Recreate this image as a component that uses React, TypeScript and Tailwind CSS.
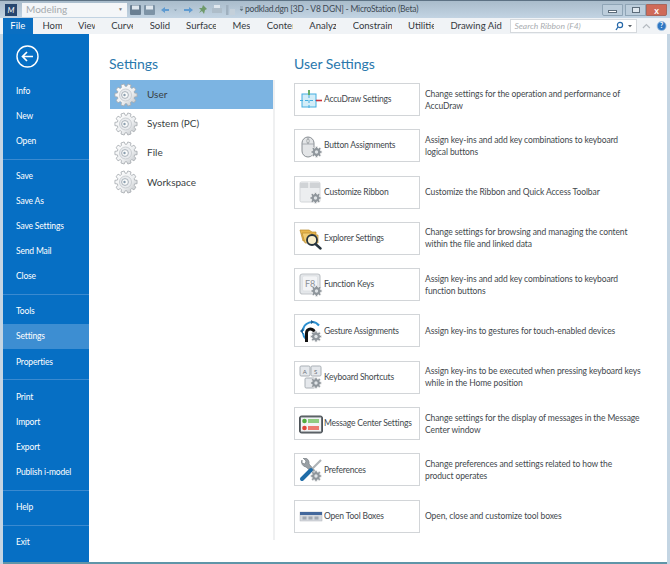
import type { ReactNode } from "react";

const font = { fontFamily: 'Lato, "Open Sans", "Liberation Sans", sans-serif' };

// little cog polygon, used all over the settings icons
function gearPoints(cx: number, cy: number, outer: number, inner: number, teeth: number) {
  const pts: string[] = [];
  for (let i = 0; i < teeth; i++) {
    const step = (Math.PI * 2) / teeth;
    const a = i * step;
    [[-0.3, outer], [0.3, outer]].forEach(([d, r]) => {
      pts.push(`${(cx + Math.cos(a + d * step * 0.8) * r).toFixed(2)},${(cy + Math.sin(a + d * step * 0.8) * r).toFixed(2)}`);
    });
    pts.push(`${(cx + Math.cos(a + step * 0.35) * inner).toFixed(2)},${(cy + Math.sin(a + step * 0.35) * inner).toFixed(2)}`);
    pts.push(`${(cx + Math.cos(a + step * 0.65) * inner).toFixed(2)},${(cy + Math.sin(a + step * 0.65) * inner).toFixed(2)}`);
  }
  return pts.join(" ");
}

const SmallGear = ({ cx = 19, cy = 19 }: { cx?: number; cy?: number }) => (
  <g>
    <polygon points={gearPoints(cx, cy, 5.6, 4.2, 8)} fill="#8f969c" stroke="#f4f4f4" strokeWidth="0.7" />
    <circle cx={cx} cy={cy} r="1.7" fill="#dfe3e6" />
  </g>
);

const BigGear = () => (
  <svg width="24" height="24" viewBox="0 0 24 24" className="shrink-0">
    <defs>
      <linearGradient id="gearFill" x1="0" y1="0" x2="1" y2="1">
        <stop offset="0" stopColor="#ffffff" />
        <stop offset="0.6" stopColor="#eceef0" />
        <stop offset="1" stopColor="#b9bdc1" />
      </linearGradient>
    </defs>
    <polygon points={gearPoints(12, 12, 11.2, 8.8, 10)} fill="url(#gearFill)" stroke="#a4a9ae" strokeWidth="0.8" />
    <circle cx="11.5" cy="12" r="6" fill="#e9ebee" stroke="#c2c6ca" strokeWidth="0.8" />
    <circle cx="11" cy="12" r="3.4" fill="#f9fafa" stroke="#a9b2ba" strokeWidth="1" />
    <circle cx="10.5" cy="12" r="1.2" fill="#8b9eae" />
  </svg>
);

const Icon = ({ children }: { children: ReactNode }) => (
  <svg width="24" height="24" viewBox="0 0 24 24" className="shrink-0">
    {children}
  </svg>
);

const icons: Record<string, ReactNode> = {
  accu: (
    <Icon>
      <rect x="3" y="6" width="14" height="13" fill="#d3edf8" stroke="#45aee0" strokeWidth="1" />
      <path d="M10 2v20M1 12.5h18" stroke="#45aee0" strokeWidth="1" strokeDasharray="3 2" fill="none" />
      <path d="M10 2v5" stroke="#59a648" strokeWidth="1.6" />
      <path d="M17 12.5h6" stroke="#c8323c" strokeWidth="1.6" />
    </Icon>
  ),
  mouse: (
    <Icon>
      <path d="M3 9a6 6 0 0 1 12 0v8a6 6 0 0 1-12 0z" fill="#e3e5e7" stroke="#8a8f94" strokeWidth="1" />
      <path d="M3 10h12M9 3v7" stroke="#9a9fa4" strokeWidth="0.8" />
      <rect x="8" y="5" width="2" height="4" rx="1" fill="#fff" stroke="#6d7276" strokeWidth="0.6" />
      <SmallGear cx={17.5} cy={18} />
    </Icon>
  ),
  ribbon: (
    <Icon>
      <rect x="1" y="2" width="20" height="20" rx="1.5" fill="#eceef0" stroke="#d3d6d9" strokeWidth="1" />
      <path d="M1 5.5h20" stroke="#d0d3d6" strokeWidth="5" />
      <path d="M10 2v6" stroke="#fff" strokeWidth="1" />
      <SmallGear cx={16.5} cy={18} />
    </Icon>
  ),
  explorer: (
    <Icon>
      <path d="M1 4h9l3 2h4v9H4z" fill="#e8b64c" stroke="#b98a2c" strokeWidth="0.7" />
      <path d="M3 7h9l3 2h4v8H6z" fill="#f2cd73" stroke="#b98a2c" strokeWidth="0.7" />
      <circle cx="13" cy="14" r="5" fill="#f8edc9" stroke="#26343e" strokeWidth="1.8" />
      <path d="M16.5 18l5 4.5" stroke="#26343e" strokeWidth="2.4" strokeLinecap="round" />
    </Icon>
  ),
  fkeys: (
    <Icon>
      <rect x="1" y="1" width="20" height="20" rx="2.5" fill="#e4e7ea" stroke="#c2c6ca" strokeWidth="1.2" />
      <rect x="3.5" y="3" width="15" height="15" rx="1.5" fill="#f3f4f6" stroke="#d9dcdf" strokeWidth="0.6" />
      <text x="6" y="14" fontSize="9" fill="#8b9196" style={font}>F8</text>
      <SmallGear cx={17.5} cy={18} />
    </Icon>
  ),
  gesture: (
    <Icon>
      <path d="M4 12a9 9 0 0 1 16-5.5" fill="none" stroke="#2b8fd0" strokeWidth="2" />
      <path d="M4 14a9 9 0 0 0 3 6" fill="none" stroke="#2b8fd0" strokeWidth="2" />
      <path d="M1 12l3-3v6zM12 1l3 2-3 2z" fill="#1d5f92" />
      <path d="M6 23v-9a5.5 5.5 0 0 1 11 0v3h-3v-3a2.5 2.5 0 0 0-5 0v9z" fill="#111" />
      <SmallGear cx={17} cy={17.5} />
    </Icon>
  ),
  keyboard: (
    <Icon>
      <rect x="1" y="1" width="10" height="10" rx="1.2" fill="#e5e8ec" stroke="#aab0b6" strokeWidth="1" />
      <rect x="12" y="1" width="10" height="10" rx="1.2" fill="#e5e8ec" stroke="#aab0b6" strokeWidth="1" />
      <rect x="6" y="13" width="10" height="10" rx="1.2" fill="#e5e8ec" stroke="#aab0b6" strokeWidth="1" />
      <text x="3.8" y="8.5" fontSize="6" fill="#6c7278" style={font}>A</text>
      <text x="15" y="8.5" fontSize="6" fill="#6c7278" style={font}>S</text>
      <SmallGear cx={17} cy={18} />
    </Icon>
  ),
  message: (
    <Icon>
      <rect x="0.5" y="4" width="23" height="17" rx="2" fill="#6a7176" stroke="#4c5257" strokeWidth="1" />
      <rect x="2" y="5.5" width="20" height="14" fill="#f1f3f4" />
      <circle cx="5.5" cy="9" r="2.3" fill="#50ad3e" />
      <rect x="9" y="7" width="11" height="4" fill="#8fcb80" />
      <circle cx="5.5" cy="16" r="2.3" fill="#e0453a" />
      <rect x="9" y="14" width="11" height="4" fill="#ec7a70" />
    </Icon>
  ),
  prefs: (
    <Icon>
      <path d="M3 2a5 5 0 0 0 4 7l10 9 2-2-9-10a5 5 0 0 0-6-6l3 3-1 3-3-1z" fill="#9aa0a5" stroke="#71777c" strokeWidth="0.6" />
      <path d="M22 2l-9 9" stroke="#aeb3b7" strokeWidth="2.2" />
      <path d="M12 12l-9 9" stroke="#1f6ca8" strokeWidth="4" strokeLinecap="round" />
      <SmallGear cx={17} cy={18} />
    </Icon>
  ),
  toolbox: (
    <Icon>
      <rect x="1" y="8" width="22" height="9" fill="#d5d8dd" stroke="#b0b5bc" strokeWidth="0.5" />
      <rect x="1" y="8" width="22" height="3" fill="#44689c" />
      <path d="M3.5 14h4M9.5 14h4M15.5 14h4" stroke="#a1a8b2" strokeWidth="3" />
    </Icon>
  ),
};

const settingsButtons = [
  { icon: "accu", label: "AccuDraw Settings", text: "Change settings for the operation and performance of AccuDraw" },
  { icon: "mouse", label: "Button Assignments", text: "Assign key-ins and add key combinations to keyboard logical buttons" },
  { icon: "ribbon", label: "Customize Ribbon", text: "Customize the Ribbon and Quick Access Toolbar" },
  { icon: "explorer", label: "Explorer Settings", text: "Change settings for browsing and managing the content within the file and linked data" },
  { icon: "fkeys", label: "Function Keys", text: "Assign key-ins and add key combinations to keyboard function buttons" },
  { icon: "gesture", label: "Gesture Assignments", text: "Assign key-ins to gestures for touch-enabled devices" },
  { icon: "keyboard", label: "Keyboard Shortcuts", text: "Assign key-ins to be executed when pressing keyboard keys while in the Home position" },
  { icon: "message", label: "Message Center Settings", text: "Change settings for the display of messages in the Message Center window" },
  { icon: "prefs", label: "Preferences", text: "Change preferences and settings related to how the product operates" },
  { icon: "toolbox", label: "Open Tool Boxes", text: "Open, close and customize tool boxes" },
];

const tabs = [
  { name: "Home", w: "w-[19px]" },
  { name: "View", w: "w-[17px]" },
  { name: "Curve", w: "w-[22px]" },
  { name: "Solids", w: "w-[20px]" },
  { name: "Surfaces", w: "w-[30px]" },
  { name: "Mesh", w: "w-[18px]" },
  { name: "Content", w: "w-[26px]" },
  { name: "Analyze", w: "w-[27px]" },
  { name: "Constraint", w: "w-[39px]" },
  { name: "Utilities", w: "w-[26px]" },
  { name: "Drawing Aid", w: "w-[54px]" },
];

const menuGroups = [
  ["Info", "New", "Open"],
  ["Save", "Save As", "Save Settings", "Send Mail", "Close"],
  ["Tools", "Settings", "Properties"],
  ["Print", "Import", "Export", "Publish i-model"],
  ["Help"],
  ["Exit"],
];

const TitleBar = () => (
  <div className="flex h-[18px] shrink-0 items-center border-t border-[#5d7284] bg-gradient-to-b from-[#a9bccb] to-[#c3d4e3] pl-[5px]">
    <div className="flex h-[12px] w-[12px] items-center justify-center bg-[#27476f] text-[8px] italic leading-none text-white">M</div>
    <div className="ml-[5px] flex h-[14px] w-[105px] items-center justify-between bg-[#f4f6f8] px-[4px] text-[10px] text-[#a5a9ad]">
      <span>Modeling</span>
      <span className="text-[5px] text-[#777]">▼</span>
    </div>
    <svg width="116" height="14" viewBox="0 0 116 14" className="ml-[2px] shrink-0">
      <rect x="1" y="2" width="11" height="10" rx="1" fill="#6a7f92" />
      <rect x="3" y="2.5" width="7" height="4" fill="#dfe7ee" />
      <rect x="15" y="2" width="11" height="10" rx="1" fill="#7d93a6" />
      <rect x="17" y="2.5" width="7" height="4" fill="#dfe7ee" />
      <path d="M32 7l4-3v2h4v2h-4v2z" fill="#5f9bd1" />
      <path d="M45 6.5h3l-1.5 1.5z" fill="#7f95a8" />
      <path d="M64 7l-4-3v2h-5v2h5v2z" fill="#5f9bd1" />
      <path d="M74 2l4 4-2 1-1 4-2-3-3 2 2-3-2-2 3 0z" fill="#6f9a6a" />
      <rect x="83" y="5" width="10" height="5" fill="#aebdc9" />
      <rect x="85" y="2" width="6" height="3" fill="#dfe7ee" />
      <rect x="97" y="2" width="2.5" height="10" fill="#9fb0bf" />
      <rect x="101" y="6" width="5" height="6" fill="#c4d0da" />
      <path d="M111 6h3l-1.5 2zM111 4h3" stroke="#60717f" strokeWidth="0.5" fill="#60717f" />
    </svg>
    <span className="whitespace-nowrap text-[8.5px] tracking-[-0.2px] text-[#3e4a55]">podklad.dgn [3D - V8 DGN] - MicroStation (Beta)</span>
    <div className="ml-auto mr-[3px] mt-[1px] flex h-[12px] items-stretch">
      <div className="flex w-[21px] items-center justify-center rounded-bl-[2px] border border-[#8fa5b6] bg-[#bccddb]">
        <div className="mt-[3px] h-[3px] w-[9px] border border-[#5c6c7a] bg-white" />
      </div>
      <div className="ml-[2px] flex w-[21px] items-center justify-center border border-[#8fa5b6] bg-[#bccddb]">
        <div className="h-[6px] w-[8px] border border-[#5c6c7a] bg-[#dfe7ee]" />
      </div>
      <div className="flex w-[21px] items-center justify-center rounded-br-[2px] border border-[#a8675c] bg-[#cf6a58] text-[9px] font-bold leading-none text-white">x</div>
    </div>
  </div>
);

const RibbonTabs = () => (
  <div className="flex h-[16px] shrink-0 items-center bg-[#f0f3f6] pl-[3px] text-[9.5px] text-[#33383d]">
    <div className="flex h-[16px] w-[30px] items-center justify-center bg-[#0a6fc2] text-white">File</div>
    <div className="ml-[10px] flex gap-[16.4px]">
      {tabs.map((t) => (
        <span key={t.name} className={`${t.w} overflow-hidden whitespace-nowrap`}>{t.name}</span>
      ))}
    </div>
    <div className="ml-[6px] flex h-[14px] w-[128px] items-center justify-between border border-[#d5d9dd] bg-white pl-[3px] pr-[3px]">
      <span className="text-[8.5px] italic text-[#a9adb1]">Search Ribbon (F4)</span>
      <svg width="18" height="10" viewBox="0 0 18 10">
        <circle cx="5" cy="4" r="2.6" fill="none" stroke="#2467a8" strokeWidth="1.2" />
        <path d="M3 6l-2 3" stroke="#2467a8" strokeWidth="1.3" />
        <path d="M13 4h4l-2 2.2z" fill="#5a6168" />
      </svg>
    </div>
    <svg width="32" height="14" viewBox="0 0 32 14" className="ml-[2px]">
      <path d="M4 9l3.5-3.5L11 9" fill="none" stroke="#b5bbc1" strokeWidth="1.2" />
      <circle cx="23" cy="7" r="4.6" fill="#2f78c4" stroke="#a8c4e0" strokeWidth="0.8" />
      <text x="21.4" y="9.5" fontSize="7" fontWeight="700" fill="#fff">?</text>
    </svg>
  </div>
);

const Sidebar = () => (
  <aside className="flex w-[86px] shrink-0 flex-col bg-[#066fc4] text-[8.5px] tracking-[-0.15px] text-white">
    <div className="flex h-[44.4px] shrink-0 items-center pl-[13px]">
      <svg width="23" height="23" viewBox="0 0 23 23">
        <circle cx="11.5" cy="11.5" r="10.5" fill="none" stroke="#fff" strokeWidth="1.4" />
        <path d="M17 11.5H6.5M11 7l-4.5 4.5L11 16" fill="none" stroke="#fff" strokeWidth="1.7" />
      </svg>
    </div>
    {menuGroups.map((group, i) => (
      <div key={i} className={i > 0 ? "mt-[5px] border-t border-[#3a8ad0] pt-[4px]" : ""}>
        {group.map((item) => (
          <div
            key={item}
            className={`flex h-[25.1px] items-center pl-[13px] ${item === "Settings" ? "bg-[#3d8ed2]" : ""}`}
          >
            {item}
          </div>
        ))}
      </div>
    ))}
  </aside>
);

export default function App() {
  return (
    <div className="flex h-[564px] w-[670px] flex-col overflow-hidden bg-[#c4d5e3]" style={font}>
      <TitleBar />
      <RibbonTabs />
      <div className="mx-[3px] flex min-h-0 flex-1 border-b-[2px] border-[#5f95a8] bg-white">
        <Sidebar />
        <main className="flex min-w-0 flex-1 pt-[20px]">
          <section className="ml-[20px] w-[165px] shrink-0">
            <h2 className="h-[26px] text-[14px] leading-[20px] text-[#2a78ad]">Settings</h2>
            <ul className="ml-[1px] h-[460px] w-[165px] border-r-2 border-[#eff0f1] text-[10px] text-[#3a3f44]">
              {["User", "System (PC)", "File", "Workspace"].map((s, i) => (
                <li key={s} className={`flex h-[29.2px] w-[163px] items-center gap-[9px] pl-[4px] ${i === 0 ? "bg-[#7cb4e2]" : ""}`}>
                  <BigGear />
                  {s}
                </li>
              ))}
            </ul>
          </section>
          <section className="ml-[20px] min-w-0 flex-1">
            <h2 className="h-[29px] text-[14px] leading-[20px] text-[#2a78ad]">User Settings</h2>
            <div className="flex flex-col gap-[13.3px]">
              {settingsButtons.map((b) => (
                <div key={b.label} className="flex h-[33px] items-center">
                  <div className="flex h-[33px] w-[126px] shrink-0 items-center gap-[1px] border border-[#d2d5d8] bg-white pl-[4px] text-[8.5px] tracking-[-0.2px] text-[#43484d]">
                    {icons[b.icon]}
                    <span className="whitespace-nowrap">{b.label}</span>
                  </div>
                  <p className="ml-[5px] w-[217px] text-[8.5px] leading-[12px] tracking-[-0.1px] text-[#43484d]">{b.text}</p>
                </div>
              ))}
            </div>
          </section>
        </main>
      </div>
    </div>
  );
}
